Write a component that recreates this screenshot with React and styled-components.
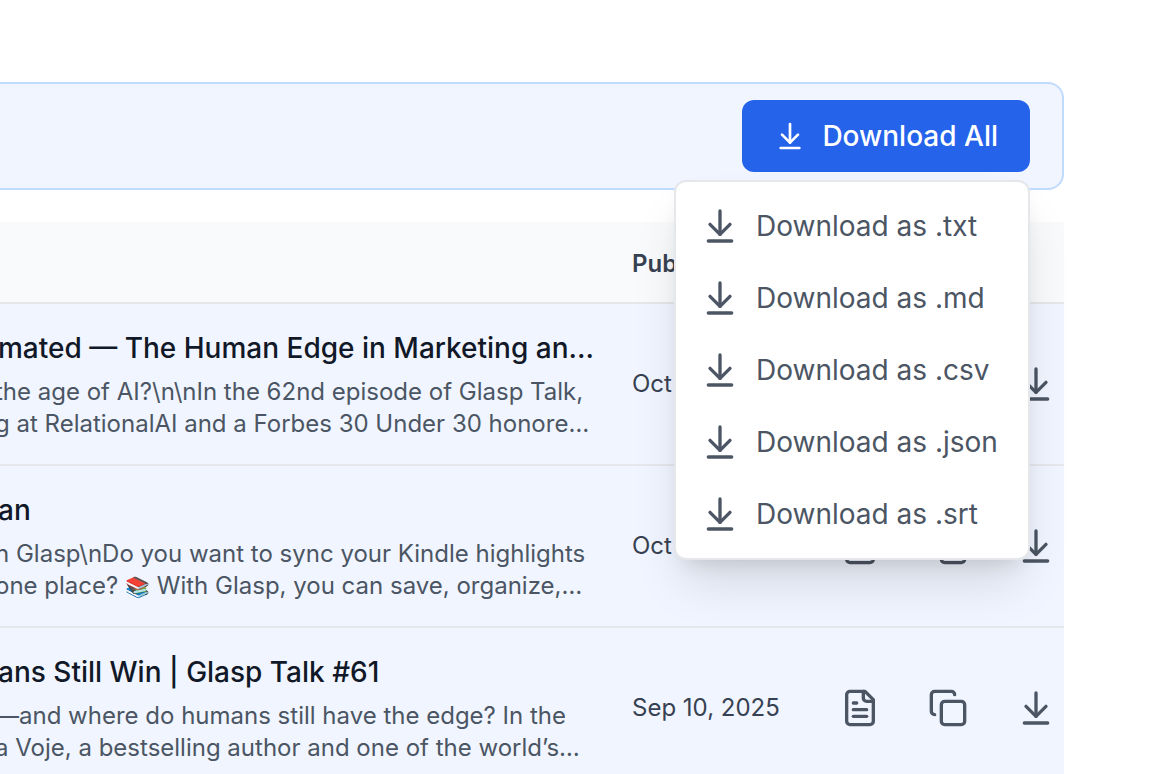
import React, { useState } from 'react';
import styled, { createGlobalStyle } from 'styled-components';

const GlobalStyle = createGlobalStyle`
  *, *::before, *::after {
    box-sizing: border-box;
  }
  body {
    margin: 0;
    background: #fff;
    font-family: Inter, "Liberation Sans", sans-serif;
    color: #111827;
  }
  button {
    font: inherit;
    border: 0;
    cursor: pointer;
  }
`;

const Page = styled.div`
  height: 100vh;
  overflow: hidden;
  padding: 82px 96px 0 0;
`;

// bleeds off the left side of the window
const Main = styled.main`
  margin-left: -32px;
`;

const Banner = styled.section`
  display: flex;
  justify-content: flex-end;
  padding: 16px 32px;
  margin-bottom: 32px;
  background: #f0f5ff;
  border: 2px solid #bfdbfe;
  border-radius: 16px;
`;

const Dropdown = styled.div`
  position: relative;
`;

const PrimaryButton = styled.button`
  display: flex;
  align-items: center;
  gap: 16px;
  padding: 16px 32px;
  border-radius: 12px;
  background: #2563eb;
  color: #fff;
  font-size: 28px;
  font-weight: 500;
  line-height: 40px;
`;

const Menu = styled.div`
  position: absolute;
  top: calc(100% + 8px);
  right: 0;
  z-index: 10;
  min-width: 356px;
  padding: 8px 0;
  background: #fff;
  border: 2px solid #e5e7eb;
  border-radius: 12px;
  box-shadow: 0 30px 50px -8px rgba(0, 0, 0, 0.12), 0 12px 20px -10px rgba(0, 0, 0, 0.12);
`;

const MenuItem = styled.button`
  display: flex;
  align-items: center;
  gap: 16px;
  width: 100%;
  padding: 16px 24px;
  background: none;
  color: #4b5563;
  font-size: 28px;
  line-height: 40px;
  white-space: nowrap;
  &:hover {
    background: #f9fafb;
  }
`;

const Table = styled.table`
  width: 100%;
  table-layout: fixed;
  border-collapse: separate;
  border-spacing: 0;
`;

const Th = styled.th`
  width: ${props => props.$width || 'auto'};
  padding: 26px 0 22px 32px;
  background: #f9fafb;
  border-bottom: 2px solid #e5e7eb;
  color: #374151;
  font-size: 24px;
  font-weight: 600;
  line-height: 32px;
  text-align: left;
`;

const Td = styled.td`
  padding: ${props => (props.$flush ? '24px 0' : '24px 0 24px 32px')};
  background: #f0f5ff;
  border-bottom: 2px solid #e5e7eb;
  color: #374151;
  font-size: 24px;
  line-height: 32px;
  white-space: nowrap;
`;

const Title = styled.div`
  margin: 0 0 8px -2px;
  color: #111827;
  font-size: 28px;
  font-weight: 500;
  line-height: 40px;
`;

const Description = styled.div`
  margin-left: -5px;
  color: #4b5563;
`;

const Line = styled.div`
  height: 32px;
`;

const Emoji = styled.span`
  font-size: 20px;
`;

const Actions = styled.div`
  display: flex;
  gap: 32px;
`;

const IconButton = styled.button`
  display: flex;
  padding: 8px;
  background: none;
  color: #4b5563;
`;

const Svg = styled.svg`
  flex: none;
  width: ${props => props.$size}px;
  height: ${props => props.$size}px;
  fill: none;
  stroke: currentColor;
  stroke-width: 2;
  stroke-linecap: round;
  stroke-linejoin: round;
`;

const DownloadIcon = ({ size = 40 }) => (
  <Svg viewBox="0 0 24 24" $size={size} aria-hidden="true">
    <path d="M12 17V3" />
    <path d="m6 11 6 6 6-6" />
    <path d="M19 21H5" />
  </Svg>
);

const FileIcon = () => (
  <Svg viewBox="0 0 24 24" $size={40} aria-hidden="true">
    <path d="M15 2H6a2 2 0 0 0-2 2v16a2 2 0 0 0 2 2h12a2 2 0 0 0 2-2V7Z" />
    <path d="M14 2v4a2 2 0 0 0 2 2h4" />
    <path d="M10 9H8" />
    <path d="M16 13H8" />
    <path d="M16 17H8" />
  </Svg>
);

const CopyIcon = () => (
  <Svg viewBox="0 0 24 24" $size={40} aria-hidden="true">
    <rect width="14" height="14" x="8" y="8" rx="2" ry="2" />
    <path d="M4 16c-1.1 0-2-.9-2-2V4c0-1.1.9-2 2-2h10c1.1 0 2 .9 2 2" />
  </Svg>
);

const formats = ['txt', 'md', 'csv', 'json', 'srt'];

const videos = [
  {
    title: 'mated — The Human Edge in Marketing an…',
    lines: [
      'the age of AI?\\n\\nIn the 62nd episode of Glasp Talk,',
      'g at RelationalAI and a Forbes 30 Under 30 honore…',
    ],
    date: 'Oct 22, 2025',
  },
  {
    title: 'an',
    lines: [
      'h Glasp\\nDo you want to sync your Kindle highlights',
      <>one place? <Emoji>📚</Emoji> With Glasp, you can save, organize,…</>,
    ],
    date: 'Oct 10, 2025',
  },
  {
    title: 'ans Still Win | Glasp Talk #61',
    lines: [
      '—and where do humans still have the edge? In the',
      'a Voje, a bestselling author and one of the world’s…',
    ],
    date: 'Sep 10, 2025',
  },
];

const App = () => {
  const [open, setOpen] = useState(true);

  return (
    <>
      <GlobalStyle />
      <Page>
        <Main>
          <Banner>
            <Dropdown>
              <PrimaryButton type="button" aria-expanded={open} onClick={() => setOpen(!open)}>
                <DownloadIcon size={32} />
                Download All
              </PrimaryButton>
              {open && (
                <Menu>
                  {formats.map(format => (
                    <MenuItem key={format} type="button">
                      <DownloadIcon />
                      Download as .{format}
                    </MenuItem>
                  ))}
                </Menu>
              )}
            </Dropdown>
          </Banner>
          <Table>
            <thead>
              <tr>
                <Th aria-label="Video" />
                <Th $width="232px">Published</Th>
                <Th $width="232px" aria-label="Actions" />
              </tr>
            </thead>
            <tbody>
              {videos.map(video => (
                <tr key={video.title}>
                  <Td>
                    <Title>{video.title}</Title>
                    <Description>
                      {video.lines.map((line, i) => <Line key={i}>{line}</Line>)}
                    </Description>
                  </Td>
                  <Td>{video.date}</Td>
                  <Td $flush>
                    <Actions>
                      <IconButton type="button" aria-label="View transcript"><FileIcon /></IconButton>
                      <IconButton type="button" aria-label="Copy"><CopyIcon /></IconButton>
                      <IconButton type="button" aria-label="Download"><DownloadIcon /></IconButton>
                    </Actions>
                  </Td>
                </tr>
              ))}
            </tbody>
          </Table>
        </Main>
      </Page>
    </>
  );
};

export default App;
